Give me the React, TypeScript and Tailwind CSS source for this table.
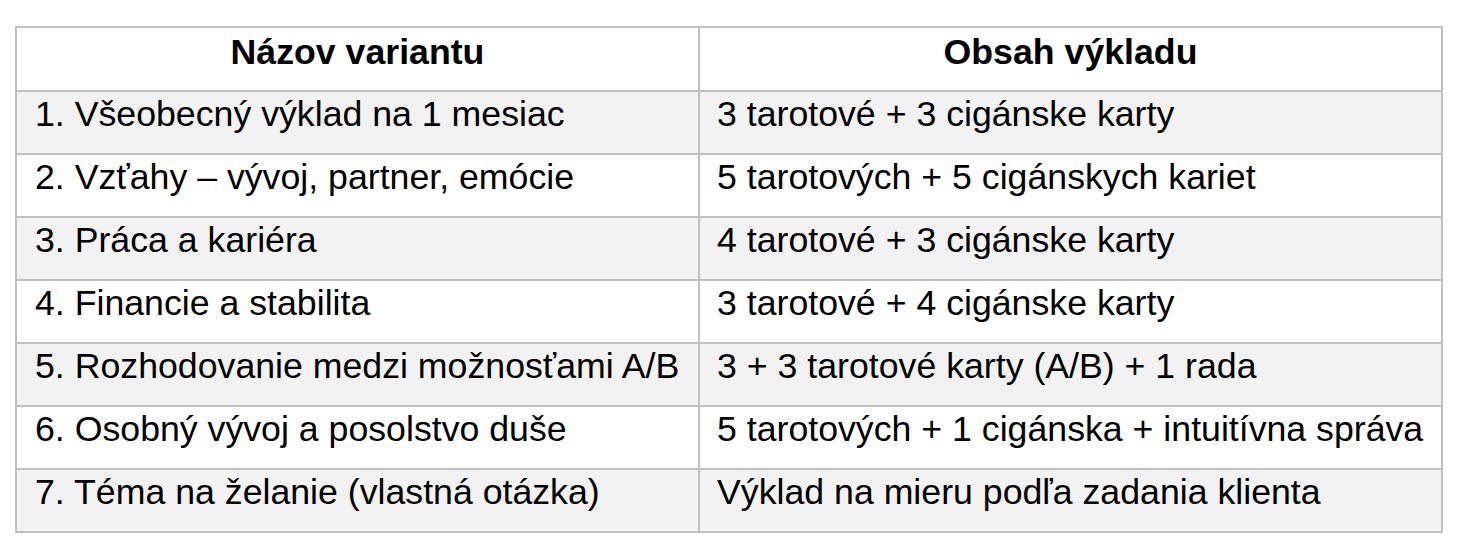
import React from "react";

const rows: [string, string][] = [
  ["1. Všeobecný výklad na 1 mesiac", "3 tarotové + 3 cigánske karty"],
  ["2. Vzťahy – vývoj, partner, emócie", "5 tarotových + 5 cigánskych kariet"],
  ["3. Práca a kariéra", "4 tarotové + 3 cigánske karty"],
  ["4. Financie a stabilita", "3 tarotové + 4 cigánske karty"],
  ["5. Rozhodovanie medzi možnosťami A/B", "3 + 3 tarotové karty (A/B) + 1 rada"],
  ["6. Osobný vývoj a posolstvo duše", "5 tarotových + 1 cigánska + intuitívna správa"],
  ["7. Téma na želanie (vlastná otázka)", "Výklad na mieru podľa zadania klienta"],
];

export default function App() {
  return (
    <div
      className="w-[1465px] h-[555px] bg-white pt-[26px] pl-[15px]"
      style={{ fontFamily: '"Liberation Sans", Arial, Helvetica, sans-serif' }}
    >
      <div className="w-[1428px] border-2 border-[#c0c0c0] text-black text-[35.7px] leading-[40px]">
        <div className="flex h-[62px]">
          <div className="w-[683px] shrink-0 border-r-2 border-[#c0c0c0] text-center font-bold pt-[4px]">
            Názov variantu
          </div>
          <div className="flex-1 text-center font-bold pt-[4px]">Obsah výkladu</div>
        </div>
        {rows.map((r, i) => (
          <div
            key={i}
            className={
              "flex h-[63px] border-t-2 border-[#c0c0c0] " +
              (i % 2 === 0 ? "bg-[#f2f2f2]" : "bg-white")
            }
          >
            <div className="w-[683px] shrink-0 border-r-2 border-[#c0c0c0] pl-[18px] pt-[2px] whitespace-nowrap">
              {r[0]}
            </div>
            <div className="flex-1 pl-[17px] pt-[2px] whitespace-nowrap">{r[1]}</div>
          </div>
        ))}
      </div>
    </div>
  );
}
